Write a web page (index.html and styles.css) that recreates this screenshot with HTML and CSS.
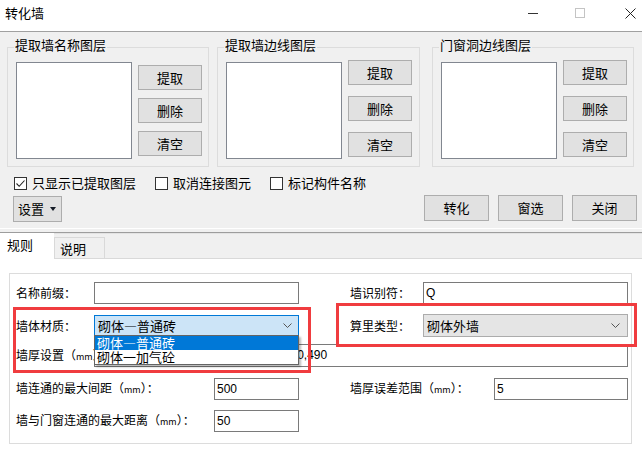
FILE: index.html
```html
<!DOCTYPE html>
<html lang="zh-CN">
<head>
<meta charset="utf-8">
<title>转化墙</title>
<link rel="stylesheet" href="styles.css">
</head>
<body>
<div class="titlebar">
  <span class="title">转化墙</span>
  <div class="controls">
    <svg class="ctl-min" width="10" height="10" viewBox="0 0 10 10"><line x1="0" y1="5.5" x2="10" y2="5.5" stroke="#333" stroke-width="1"/></svg>
    <svg class="ctl-max" width="10" height="10" viewBox="0 0 10 10"><rect x="0.5" y="0.5" width="9" height="9" fill="none" stroke="#c4c4c4" stroke-width="1"/></svg>
    <svg class="ctl-close" width="11" height="11" viewBox="0 0 11 11"><path d="M0.5 0.5L10.5 10.5M10.5 0.5L0.5 10.5" stroke="#222" stroke-width="1" fill="none"/></svg>
  </div>
</div>

<div class="top">
  <div class="groups">
    <fieldset class="grp g1">
      <legend>提取墙名称图层</legend>
      <div class="list"></div>
      <div class="btncol">
        <button class="btn">提取</button>
        <button class="btn">删除</button>
        <button class="btn">清空</button>
      </div>
    </fieldset>
    <fieldset class="grp g2">
      <legend>提取墙边线图层</legend>
      <div class="list"></div>
      <div class="btncol">
        <button class="btn">提取</button>
        <button class="btn">删除</button>
        <button class="btn">清空</button>
      </div>
    </fieldset>
    <fieldset class="grp g3">
      <legend>门窗洞边线图层</legend>
      <div class="list"></div>
      <div class="btncol">
        <button class="btn">提取</button>
        <button class="btn">删除</button>
        <button class="btn">清空</button>
      </div>
    </fieldset>
  </div>

  <div class="checks">
    <label class="chk"><span class="box"><svg width="11" height="11" viewBox="0 0 11 11"><path d="M1.5 5.5L4.2 8.3L9.5 2.5" fill="none" stroke="#222" stroke-width="1.1"/></svg></span><span>只显示已提取图层</span></label>
    <label class="chk"><span class="box"></span><span>取消连接图元</span></label>
    <label class="chk"><span class="box"></span><span>标记构件名称</span></label>
  </div>

  <div class="actions">
    <button class="btn setbtn"><span>设置</span><svg width="6" height="4" viewBox="0 0 6 4"><path d="M0 0H6L3 4Z" fill="#141b26"/></svg></button>
    <div class="right">
      <button class="btn">转化</button>
      <button class="btn">窗选</button>
      <button class="btn">关闭</button>
    </div>
  </div>
  <div class="sep"></div>
</div>

<div class="tabs">
  <span class="tab active">规则</span>
  <span class="tab other">说明</span>
</div>

<div class="content">
  <div class="panel">
    <div class="row r1">
      <div class="cell l"><span class="lab">名称前缀：</span><span class="inp w205"></span></div>
      <div class="cell r"><span class="lab">墙识别符：</span><span class="inp w205">Q</span></div>
    </div>
    <div class="row r2">
      <div class="cell l"><span class="lab">墙体材质：</span>
        <div class="sel open">
          <span>砌体—普通砖</span>
          <svg class="chev" width="9" height="5" viewBox="0 0 9 5"><path d="M0.5 0.5L4.5 4.5L8.5 0.5" fill="none" stroke="#555" stroke-width="1"/></svg>
          <div class="dd">
            <div class="opt on">砌体—普通砖</div>
            <div class="opt">砌体一加气砼</div>
          </div>
        </div>
      </div>
      <div class="cell r"><span class="lab">算里类型：</span>
        <div class="sel plain">
          <span>砌体外墙</span>
          <svg class="chev" width="9" height="5" viewBox="0 0 9 5"><path d="M0.5 0.5L4.5 4.5L8.5 0.5" fill="none" stroke="#555" stroke-width="1"/></svg>
        </div>
      </div>
    </div>
    <div class="row r3">
      <span class="lab w78">墙厚设置（<span class="mm">mm</span>）：</span>
      <span class="inp wide">120,150,180,200,240,250,300,360,370,490</span>
    </div>
    <div class="row r4">
      <div class="cell l"><span class="lab">墙连通的最大间距（<span class="mm">mm</span>）：</span><span class="inp w85">500</span></div>
      <div class="cell r"><span class="lab">墙厚误差范围（<span class="mm">mm</span>）：</span><span class="inp w134">5</span></div>
    </div>
    <div class="row r5">
      <div class="cell l"><span class="lab">墙与门窗连通的最大距离（<span class="mm">mm</span>）：</span><span class="inp w85">50</span></div>
    </div>
  </div>
  <div class="mark m1"></div>
  <div class="mark m2"></div>
</div>
</body>
</html>
```

FILE: styles.css
```css
* { box-sizing: border-box; }
html, body { margin: 0; padding: 0; }
body {
  width: 642px;
  height: 452px;
  overflow: hidden;
  background: #f0f0f0;
  font-family: "Noto Sans CJK SC", "Noto Sans", sans-serif;
  font-size: 13px;
  line-height: 16px;
  color: #000;
}

/* title bar */
.titlebar {
  height: 32px;
  background: #fff;
  border-bottom: 1px solid #a0a0a0;
  display: flex;
  align-items: flex-start;
  padding: 5px 0 0 5px;
}
.title { flex: 1; font-size: 13px; line-height: 16px; }
.controls { display: flex; align-items: flex-start; padding-right: 6px; margin-top: 3px; }
.controls svg { display: block; }
.ctl-max { margin-left: 37px; }
.ctl-close { margin-left: 40px; }

/* top area */
.top { padding: 7px 0 0 7px; }
.groups { display: flex; }
.grp {
  margin: 0;
  border: 1px solid #dcdcdc;
  padding: 7px 6px 7px 8px;
  display: flex;
  gap: 6px;
  align-items: flex-start;
  width: 202px;
  min-width: 0;
}
.grp.g2 { width: 203px; margin-left: 8px; }
.grp.g3 { margin-left: 12px; }
.grp legend {
  padding: 0 1px 4px 1px;
  margin-left: -2px;
  font-size: 13px;
  line-height: 12px;
}
.list {
  flex: none;
  width: 116px;
  height: 97px;
  background: #fff;
  border: 1px solid #828790;
}
.btncol { display: flex; flex-direction: column; gap: 11px; margin-top: -2px; }
.g1 .btncol { gap: 8px; margin-top: 3px; }

.btn {
  width: 64px;
  height: 25px;
  margin: 0;
  padding: 0;
  background: #e1e1e1;
  border: 1px solid #adadad;
  border-radius: 0;
  font-family: "Noto Sans CJK SC", "Noto Sans", sans-serif;
  font-size: 13px;
  line-height: 16px;
  color: #000;
  display: flex;
  align-items: center;
  justify-content: center;
}

.checks {
  display: flex;
  align-items: center;
  height: 16px;
  margin-top: 8px;
  padding-left: 7px;
}
.chk { display: flex; align-items: center; gap: 5px; margin-right: 19px; }
.box {
  width: 13px;
  height: 13px;
  border: 1px solid #333;
  background: #fff;
  display: block;
}
.box svg { display: block; }

.actions { display: flex; align-items: flex-start; height: 27px; margin-top: 4px; }
.setbtn {
  width: 49px;
  height: 26px;
  margin: 1px 0 0 6px;
  justify-content: flex-start;
  padding-left: 4px;
  gap: 6px;
}
.setbtn svg { display: block; }
.right { margin-left: auto; display: flex; gap: 9px; padding-right: 5px; }
.right .btn { width: 65px; height: 26px; }

.sep { margin-top: 6px; height: 4px; border-top: 1px solid #fff; margin-left: -7px; }

/* tabs */
.tabs {
  display: flex;
  align-items: flex-end;
  height: 27px;
  border-top: 1px solid #9d9d9d;
  border-bottom: 1px solid #d9d9d9;
  background: #f0f0f0;
  box-shadow: inset 0 1px 0 #e3e3e3;
}
.tab { font-size: 13px; }
.tab.active {
  width: 54px;
  height: 26px;
  margin-bottom: -1px;
  background: #fff;
  padding-left: 7px;
  line-height: 24px;
  position: relative;
}
.tab.other {
  width: 51px;
  height: 21px;
  border: 1px solid #d9d9d9;
  border-bottom: none;
  padding-left: 5px;
  line-height: 21px;
}

/* content */
.content {
  position: relative;
  background: #fff;
  height: 193px;
  padding: 14px 0 0 9px;
}
.panel {
  width: 623px;
  height: 171px;
  border: 1px solid #dcdcdc;
  padding: 8px 0 0 6px;
  font-size: 12px;
  line-height: 16px;
}
.row { display: flex; align-items: center; }
.r1 { height: 22px; }
.r2 { height: 23px; margin-top: 10px; }
.r3 { height: 23px; margin-top: 7px; }
.r4 { height: 22px; margin-top: 11px; }
.r5 { height: 22px; margin-top: 10px; }
.cell { display: flex; align-items: center; height: 100%; }
.cell.l { width: 283px; }
.cell.r { width: 278px; margin-left: 51px; }
.lab { flex: 1; white-space: nowrap; }
.lab.w78 { flex: none; width: 78px; overflow: hidden; }
.mm { font-size: 9px; }

.inp {
  display: block;
  height: 22px;
  border: 1px solid #7a7a7a;
  background: #fff;
  font-family: "Liberation Sans", Arial, sans-serif;
  font-size: 12px;
  line-height: 20px;
  padding-left: 2px;
  white-space: nowrap;
  overflow: hidden;
  flex: none;
}
.inp.w205 { width: 205px; }
.inp.w85 { width: 85px; }
.inp.w134 { width: 134px; }
.inp.wide { width: 534px; height: 23px; line-height: 21px; }

.sel {
  position: relative;
  flex: none;
  width: 205px;
  display: flex;
  align-items: center;
  padding-left: 3px;
  font-size: 13px;
  line-height: 16px;
}
.sel .chev { margin-left: auto; display: block; }
.sel.open {
  height: 21px;
  border: 1px solid #0078d7;
  background: #cce4f7;
}
.sel.open .chev { margin-right: 6px; }
.sel.plain {
  height: 23px;
  border: 1px solid #acacac;
  background: #e5e5e5;
}
.sel.plain .chev { margin-right: 7px; }

.dd {
  position: absolute;
  left: -1px;
  top: 100%;
  width: 205px;
  border: 1px solid #646464;
  background: #fff;
  box-shadow: 2px 2px 2px rgba(0, 0, 0, 0.28);
  z-index: 2;
}
.opt { height: 14px; line-height: 14px; padding-left: 2px; font-size: 13px; white-space: nowrap; }
.opt.on { background: #0078d7; color: #fff; }

/* annotation boxes */
.mark { position: absolute; border: 3px solid #f03c3f; pointer-events: none; z-index: 3; }
.m1 { left: 13px; top: 48px; width: 298px; height: 66px; }
.m2 { left: 336px; top: 44px; width: 301px; height: 44px; }
```
